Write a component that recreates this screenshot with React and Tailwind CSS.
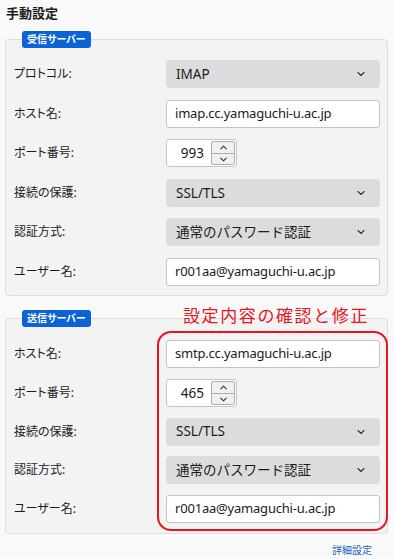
import { ChevronDown, ChevronUp } from "lucide-react"

const FONT = "font-['Noto_Sans','Noto_Sans_CJK_JP',sans-serif]"

const incoming = [
  { label: "プロトコル:", type: "select", value: "IMAP" },
  { label: "ホスト名:", type: "input", value: "imap.cc.yamaguchi-u.ac.jp" },
  { label: "ポート番号:", type: "port", value: "993" },
  { label: "接続の保護:", type: "select", value: "SSL/TLS" },
  { label: "認証方式:", type: "select", value: "通常のパスワード認証" },
  { label: "ユーザー名:", type: "input", value: "r001aa@yamaguchi-u.ac.jp" },
]

const outgoing = [
  { label: "ホスト名:", type: "input", value: "smtp.cc.yamaguchi-u.ac.jp" },
  { label: "ポート番号:", type: "port", value: "465" },
  { label: "接続の保護:", type: "select", value: "SSL/TLS" },
  { label: "認証方式:", type: "select", value: "通常のパスワード認証" },
  { label: "ユーザー名:", type: "input", value: "r001aa@yamaguchi-u.ac.jp" },
]

const Control = ({ type, value }) => {
  if (type === "select") {
    return (
      <div className="h-[28px] w-full rounded-[4px] bg-[#dcdcdc] flex items-center justify-between pl-[10px] pr-[13px]">
        <span className="text-[13.5px] text-[#1b1b1b]">{value}</span>
        <ChevronDown size={12} strokeWidth={2.2} className="text-[#333]" />
      </div>
    )
  }
  if (type === "port") {
    return (
      <div className="h-[28px] w-[71px] rounded-[3px] border border-[#c4c4c4] bg-white flex items-center justify-between pl-[6px] pr-[1px]">
        <span className="flex-1 text-right pr-[7px] text-[13.5px] text-[#1b1b1b]">
          {value}
        </span>
        <div className="flex flex-col w-[24px] h-[24px] border border-[#adadad] rounded-[2px] bg-[#f0f0f0]">
          <div className="flex-1 flex items-center justify-center border-b border-[#adadad]">
            <ChevronUp size={11} strokeWidth={2.4} className="text-[#333]" />
          </div>
          <div className="flex-1 flex items-center justify-center">
            <ChevronDown size={11} strokeWidth={2.4} className="text-[#333]" />
          </div>
        </div>
      </div>
    )
  }
  return (
    <div className="h-[28px] w-full rounded-[3px] border border-[#c4c4c4] bg-white flex items-center pl-[8px]">
      <span className="text-[13px] tracking-[-0.2px] text-[#1b1b1b]">{value}</span>
    </div>
  )
}

const Group = ({ title, rows, className, gap }) => (
  <fieldset
    className={`border border-[#dedede] rounded-[4px] bg-[#f3f3f3] pl-[8px] pr-[7px] ${className}`}
  >
    <legend className="ml-[8px] h-[17px] px-[5px] rounded-[3px] bg-[#0b63d6] text-white text-[10px] font-bold leading-[17px] [font-feature-settings:'palt']">
      {title}
    </legend>
    <div className={`flex flex-col ${gap}`}>
      {rows.map((row, i) => (
        <div key={i} className="grid grid-cols-[152px_1fr] items-center">
          <span className="text-[12px] text-[#1b1b1b] [font-feature-settings:'palt']">
            {row.label}
          </span>
          <Control type={row.type} value={row.value} />
        </div>
      ))}
    </div>
  </fieldset>
)

export default function App() {
  return (
    <div className={`relative w-[393px] h-[559px] bg-[#f9f9f9] overflow-hidden ${FONT}`}>
      <div className="px-[5px] pt-[3px]">
        <h1 className="pl-[1px] h-[28px] leading-[20px] text-[13px] font-bold text-[#1b1b1b]">
          手動設定
        </h1>
        <Group
          title="受信サーバー"
          rows={incoming}
          gap="gap-[11.6px]"
          className="pt-[12px] pb-[9px]"
        />
        <Group
          title="送信サーバー"
          rows={outgoing}
          gap="gap-[10.8px]"
          className="mt-[14px] pt-[13px] pb-[10px]"
        />
        <div className="flex justify-end pr-[16px] pt-[9px]">
          <span className="text-[10px] text-[#1a5fc0]">詳細設定</span>
        </div>
      </div>

      {/* annotation overlay */}
      <div className="absolute left-[183px] top-[302px] text-[17px] tracking-[1.6px] text-[#e8141e] font-['Noto_Sans_CJK_JP',sans-serif]">
        設定内容の確認と修正
      </div>
      <div className="absolute left-[157px] top-[331px] w-[231px] h-[200px] border-[2.5px] border-[#e8141e] rounded-[14px]" />
    </div>
  )
}
